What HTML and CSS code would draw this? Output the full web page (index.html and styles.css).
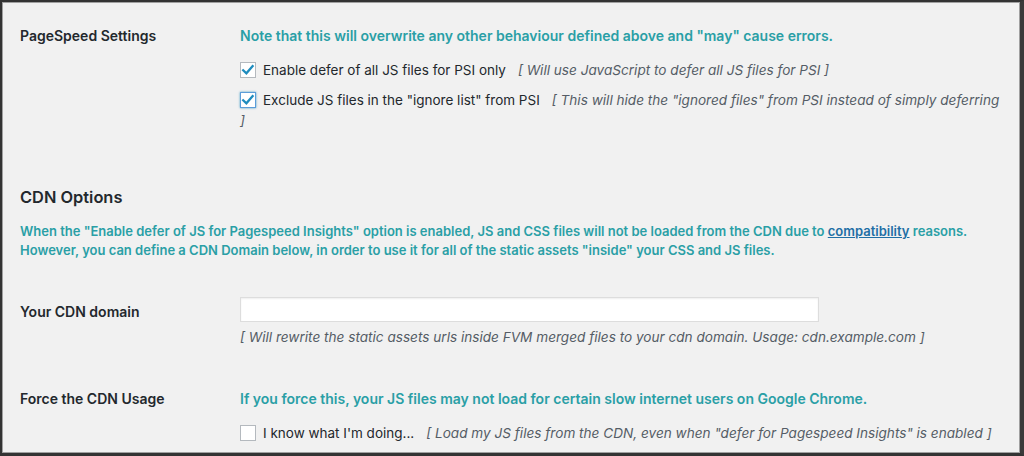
FILE: index.html
```html
<!DOCTYPE html>
<html>
<head>
<meta charset="utf-8">
<link rel="stylesheet" href="styles.css">
</head>
<body>
<div class="frame">
  <div class="row row-psi">
    <div class="th">PageSpeed Settings</div>
    <div class="td">
      <div class="note">Note that this will overwrite any other behaviour defined above and "may" cause errors.</div>
      <div class="opt opt-first">
        <span class="cb"><svg viewBox="0 0 16 16" width="16" height="16"><path d="M3.2 8.3 L6.4 11.3 L12.6 4.2" fill="none" stroke="#1e8cbe" stroke-width="2.3" stroke-linecap="square"/></svg></span><span class="lbl">Enable defer of all JS files for PSI only</span><span class="desc">[ Will use JavaScript to defer all JS files for PSI ]</span>
      </div>
      <div class="opt">
        <span class="cb focus"><svg viewBox="0 0 16 16" width="16" height="16"><path d="M3.2 8.3 L6.4 11.3 L12.6 4.2" fill="none" stroke="#1e8cbe" stroke-width="2.3" stroke-linecap="square"/></svg></span><span class="lbl">Exclude JS files in the "ignore list" from PSI</span><span class="desc">[ This will hide the "ignored files" from PSI instead of simply deferring ]</span>
      </div>
    </div>
  </div>

  <h2 class="section">CDN Options</h2>
  <p class="intro">When the "Enable defer of JS for Pagespeed Insights" option is enabled, JS and CSS files will not be loaded from the CDN due to <a href="#">compatibility</a> reasons.<br>However, you can define a CDN Domain below, in order to use it for all of the static assets "inside" your CSS and JS files.</p>

  <div class="row row-domain">
    <div class="th th-domain">Your CDN domain</div>
    <div class="td">
      <input class="text" type="text">
      <div class="desc desc-block">[ Will rewrite the static assets urls inside FVM merged files to your cdn domain. Usage: cdn.example.com ]</div>
    </div>
  </div>

  <div class="row row-force">
    <div class="th">Force the CDN Usage</div>
    <div class="td">
      <div class="note">If you force this, your JS files may not load for certain slow internet users on Google Chrome.</div>
      <div class="opt opt-first">
        <span class="cb"></span><span class="lbl">I know what I'm doing...</span><span class="desc">[ Load my JS files from the CDN, even when "defer for Pagespeed Insights" is enabled ]</span>
      </div>
    </div>
  </div>
</div>
</body>
</html>
```

FILE: styles.css
```css
html, body {
  margin: 0;
  padding: 0;
}
body {
  font-family: "Inter", "Liberation Sans", sans-serif;
  font-size: 13px;
  color: #23282d;
  background: #f1f1f1;
}
.frame {
  box-sizing: border-box;
  width: 1024px;
  height: 456px;
  overflow: hidden;
  background: #f1f1f1;
  border-top: 2px solid #333;
  border-left: 2px solid #333;
  border-right: 4px solid #3a3a3a;
  border-bottom: 3px solid #333;
  box-shadow: inset 0 0 0 1px #a0a0a0;
  padding-left: 18px;
}
.row {
  display: flex;
  align-items: flex-start;
}
.th {
  width: 220px;
  flex: none;
  font-size: 14px;
  font-weight: 600;
  line-height: 20px;
}
.td {
  flex: 1;
  line-height: 20px;
  padding-right: 16px;
}
.row-psi {
  margin-top: 24px;
}
.note {
  color: #2a9fa6;
  font-size: 14px;
  font-weight: 600;
}
.opt {
  margin-top: 10px;
  display: block;
}
.opt-first {
  margin-top: 14px;
}
.cb {
  box-sizing: border-box;
  display: inline-block;
  width: 16px;
  height: 16px;
  border: 1px solid #b4b9be;
  background: #fff;
  vertical-align: -3px;
  margin-right: 7px;
  position: relative;
}
.cb svg {
  position: absolute;
  left: -1px;
  top: -1px;
}
.cb.focus {
  border-color: #5b9dd9;
  box-shadow: 0 0 2px rgba(30, 140, 190, 0.8);
}
.lbl {
  font-size: 13.5px;
  margin-right: 12px;
}
.desc {
  font-size: 13.6px;
  font-style: italic;
  color: #555d66;
}
.section {
  margin: 55px 0 0;
  font-size: 16.4px;
  font-weight: 600;
  line-height: 24px;
  color: #23282d;
}
.intro {
  margin: 13px 0 0;
  color: #2a9fa6;
  font-weight: 600;
  line-height: 19px;
}
.intro a {
  color: #1f6fa5;
  text-decoration: underline;
}
.row-domain {
  margin-top: 37px;
}
.th-domain {
  padding-top: 5px;
}
.text {
  display: block;
  box-sizing: border-box;
  width: 579px;
  height: 25px;
  margin: 0;
  border: 1px solid #ddd;
  background: #fff;
  box-shadow: inset 0 1px 2px rgba(0, 0, 0, 0.07);
  padding: 0 6px;
}
.desc-block {
  margin-top: 5px;
}
.row-force {
  margin-top: 42px;
}
```
